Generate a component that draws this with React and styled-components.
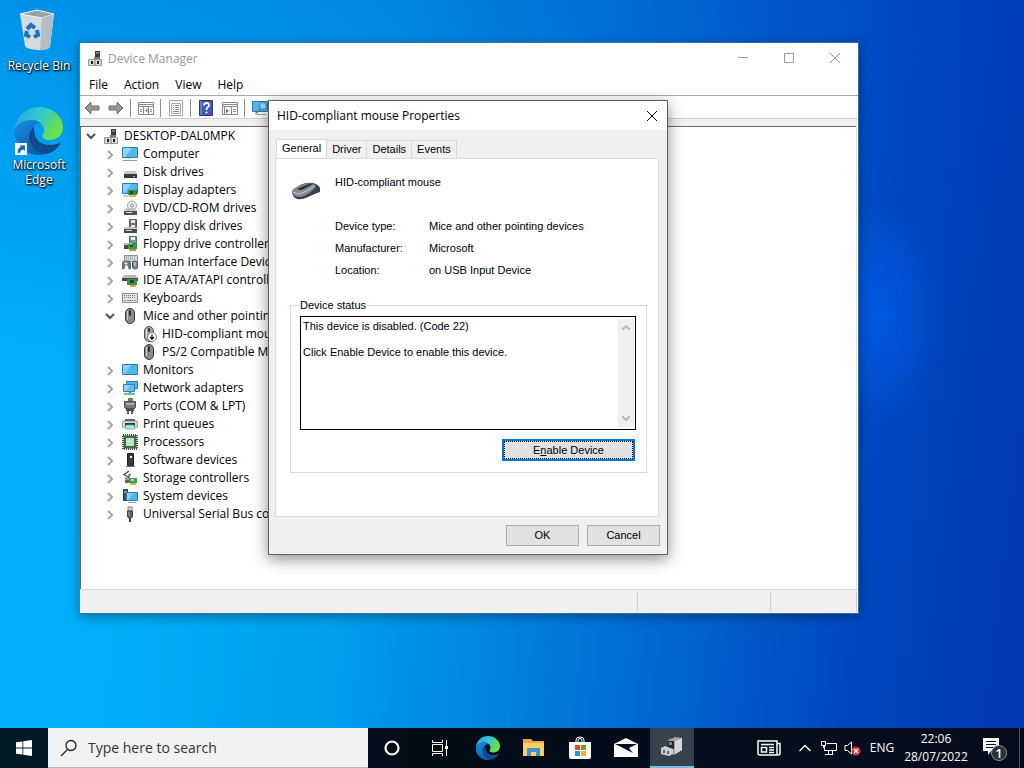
import React, { useState } from "react";
import styled, { createGlobalStyle } from "styled-components";

const GlobalStyle = createGlobalStyle`
  * {
    box-sizing: border-box;
  }
  body {
    margin: 0;
    overflow: hidden;
    font-family: "Open Sans", "Noto Sans", sans-serif;
    font-size: 12px;
    color: #000;
  }
  button, input, textarea {
    font: inherit;
    color: inherit;
    border: none;
    border-radius: 0;
    padding: 0;
    margin: 0;
    background: none;
    outline: none;
  }
`;

// small 16x16 drawings used in the tree and in the toolbar
const icons = {
  devmgr: (
    <>
      <path d="M8 1h5v6H8z" fill="#3d3d3d" />
      <path d="M9 2h3v2H9z" fill="#777" />
      <path d="M7 7h6v2H7z" fill="#777" />
      <path d="M1.5 9.500h13v6h-13z" fill="#d9d9d9" stroke="#9a9a9a" />
      <path d="M4 11h2v3H4zM10 11h2v3h-2z" fill="#222" />
      <path d="M7 10h2v5H7z" fill="#aaa" />
    </>
  ),
  computer: (
    <>
      <path d="M.5 1.5h15v10H.5z" fill="#4fb8f2" stroke="#3779a6" />
      <path d="M1 2h9L3 11H1z" fill="#8ad5fa" />
      <path d="M6 12h4v1H6z" fill="#cfdde6" />
      <path d="M1 14.500h14" stroke="#7ba0c0" />
    </>
  ),
  monitor: (
    <>
      <path d="M.5 2.5h15v10H.5z" fill="#4fb8f2" stroke="#3779a6" />
      <path d="M1 3h8l-6 9H1z" fill="#86d2fa" />
    </>
  ),
  disk: (
    <>
      <path d="M3 7h11l1 3H2z" fill="#c4c8ca" />
      <path d="M2 10h13v4H2z" fill="#343a3c" />
      <path d="M11 12h2v1h-2z" fill="#4fe06b" />
    </>
  ),
  display: (
    <>
      <path d="M.5 1.5h15v10H.5z" fill="#4fb8f2" stroke="#3779a6" />
      <path d="M1 2h8l-6 9H1z" fill="#86d2fa" />
      <path d="M6 8h9v5H6z" fill="#3a8b3e" />
      <path d="M8 9h3v3H8z" fill="#1c4a22" />
      <path d="M7 13h7v2H7z" fill="#e0bc3c" />
      <path d="M1 14h5" stroke="#7ba0c0" />
    </>
  ),
  dvd: (
    <>
      <circle cx="10" cy="5.500" r="4.500" fill="#ececec" stroke="#a4a4a4" />
      <circle cx="10" cy="5.500" r="1.500" fill="#fff" stroke="#8a8a8a" />
      <path d="M4 8h8l3 3H2z" fill="#bfc3c5" />
      <path d="M2 11h13v4H2z" fill="#4b5052" />
      <path d="M4 12h6v1H4z" fill="#ddd" />
    </>
  ),
  floppy: (
    <>
      <path d="M7.500 1.500h7v8h-7z" fill="#6d7679" stroke="#535b5e" />
      <path d="M9 2h4v3H9z" fill="#dbe8ee" />
      <path d="M9 7h4v3H9z" fill="#e9e9e9" />
      <path d="M3 9h10l2 2H2z" fill="#c4c8ca" />
      <path d="M2 11h13v4H2z" fill="#43494b" />
      <path d="M4 12h6v1H4z" fill="#ddd" />
    </>
  ),
  floppyCtl: (
    <>
      <path d="M7.500.500h7v7h-7z" fill="#6c9c9a" stroke="#4d6e6d" />
      <path d="M9 1h4v3H9z" fill="#e4eff2" />
      <path d="M2 7h8v2H2z" fill="#b8bcbe" />
      <path d="M2 9h10v4H2z" fill="#454b4d" />
      <path d="M6 8h9v5H6z" fill="#3d9a48" />
      <path d="M8 9h3v2H8z" fill="#1d5228" />
      <path d="M7 13h7v2H7z" fill="#b59a36" />
    </>
  ),
  hid: (
    <>
      <path d="M2.500 1.500h13v6h-13z" fill="#d8dadc" stroke="#8e9294" />
      <path d="M4 3h10M4 5h10" stroke="#85898c" strokeDasharray="1 1" />
      <path d="M.5 15V9q0-2 2-2h4q2 0 2 2v6H7l-1-4H3l-1 4z" fill="#707a80" stroke="#4f565a" strokeWidth=".7" />
      <path d="M10.500 9q0-2 2.500-2t2.500 2v4q0 2-2.500 2t-2.500-2z" fill="#7e888e" stroke="#4f565a" />
      <path d="M4 8v3M2.500 9.500h3M13 8v4" stroke="#dcecf6" />
    </>
  ),
  ide: (
    <>
      <path d="M2 3h12l2 3H0z" fill="#b8bcbe" />
      <path d="M0 6h16v3H0z" fill="#454b4d" />
      <path d="M5 7h10v6H5z" fill="#38923f" />
      <path d="M8 8h4v3H8z" fill="#1b4923" />
      <path d="M8 13h6v2H8z" fill="#d1ad38" />
    </>
  ),
  keyboard: (
    <>
      <path d="M.5 3.500h15v9H.5z" fill="#e3e5e6" stroke="#8a8e90" />
      <path d="M2 5.500h12M2 7.500h12" stroke="#6e7375" strokeDasharray="1 1" />
      <path d="M2 10.500h2M5 10.500h6M12 10.500h2" stroke="#84898c" />
    </>
  ),
  mouse: (
    <>
      <rect x="3.500" y=".500" width="9" height="15" rx="4.500" fill="#858c90" stroke="#33383a" />
      <path d="M5.500 3v9" stroke="#c9ced1" />
      <rect x="7" y="2" width="2" height="6" rx="1" fill="#2e3234" />
    </>
  ),
  mouseOff: (
    <>
      <rect x="3.500" y=".500" width="9" height="15" rx="4.500" fill="#a2a7aa" stroke="#4a4f52" />
      <path d="M5.500 3v9" stroke="#d9ddde" />
      <rect x="7" y="2" width="2" height="4" rx="1" fill="#2e3234" />
      <circle cx="11" cy="11" r="4.500" fill="#fff" stroke="#777" />
      <path d="M11 8.500v4M9 11l2 2.200 2-2.200" stroke="#111" strokeWidth="1.300" fill="none" />
    </>
  ),
  network: (
    <>
      <path d="M4.500 1.500h11v7h-11z" fill="#4fb8f2" stroke="#3779a6" />
      <path d="M1.500 4.500h11v7h-11z" fill="#5cc0f5" stroke="#3779a6" />
      <path d="M2 5h6l-4 6H2z" fill="#8ed6fa" />
      <path d="M7 12h2v1H7z" fill="#3b8f60" />
      <path d="M2 14h11" stroke="#6cc290" strokeWidth="2" />
    </>
  ),
  port: (
    <>
      <path d="M6 0h5v3H6z" fill="#777" />
      <path d="M2.500 3.500h11v6l-1 1h-9l-1-1z" fill="#70767a" stroke="#4b5053" />
      <path d="M4 5h8v2H4z" fill="#a9aeb0" />
      <path d="M4 11h8v2H4z" fill="#4a4f52" />
      <path d="M6 13v3M10 13v3" stroke="#55595c" strokeWidth="2" />
    </>
  ),
  printer: (
    <>
      <path d="M3 3h10v3H3z" fill="#5e6669" />
      <path d="M1 5h14l1 6H0z" fill="#d9dcde" stroke="#70777a" strokeWidth=".8" />
      <path d="M3 7h10v3H3z" fill="#2f3638" />
      <path d="M4 9h8l1 4H3z" fill="#a6e6ec" stroke="#6da6ad" strokeWidth=".7" />
    </>
  ),
  cpu: (
    <>
      <path d="M1 1h14v14H1z" fill="none" stroke="#3a5d43" strokeWidth="2" strokeDasharray="1 1" />
      <path d="M1.500 1.500h13v13h-13z" fill="#3f6a4a" />
      <path d="M4 4h8v8H4z" fill="#bfe6c4" />
    </>
  ),
  software: (
    <>
      <path d="M5.500 1.500h6v12h-6z" fill="#3a3d3f" stroke="#222" />
      <path d="M8 4h2v2H8z" fill="#fff" />
      <path d="M4 14h9v1H4z" fill="#777" />
    </>
  ),
  storage: (
    <>
      <path d="M7 1L2 4.500l5 3V5l2-1" fill="none" stroke="#4a4f52" strokeWidth="1.300" />
      <path d="M3 8h4l4 2H4z" fill="#c4c8ca" stroke="#555" strokeWidth=".7" />
      <path d="M3 10h10v3H3z" fill="#5b6164" />
      <path d="M7 8h8v5H7z" fill="#439c50" />
      <path d="M9 9h3v2H9z" fill="#a9dcc9" />
      <path d="M8 13h6v2H8z" fill="#d8b03a" />
    </>
  ),
  system: (
    <>
      <path d="M1.500 1.500h4v11h-4z" fill="#4c5356" stroke="#303537" />
      <path d="M2 3h3v2H2z" fill="#58aee0" />
      <path d="M4.500 4.500h11v8h-11z" fill="#4fb8f2" stroke="#3779a6" />
      <path d="M5 5h6l-5 7H5z" fill="#86d2fa" />
      <path d="M6 14.500h8" stroke="#7ba0c0" />
    </>
  ),
  usb: (
    <>
      <path d="M6 1h4v4H6z" fill="#ddd" stroke="#6b6f71" strokeWidth=".9" />
      <path d="M5.500 5h5v5l-1 2h-3l-1-2z" fill="#5b6063" stroke="#404446" />
      <path d="M7 6v4" stroke="#a5aaac" />
      <path d="M8 12v4" stroke="#404446" strokeWidth="2" />
    </>
  ),
  back: <path d="M1 8l6-6v4h8v4H7v4z" fill="#969696" stroke="#6c6c6c" />,
  forward: <path d="M15 8L9 2v4H1v4h8v4z" fill="#969696" stroke="#6c6c6c" />,
  showTree: (
    <>
      <path d="M.5 2.500h15v12H.5z" fill="#fff" stroke="#84898d" />
      <path d="M1 4.500h14M1 6.500h14" stroke="#84898d" />
      <path d="M5.500 7v8M10.500 7v8M2 9.500h2M2 11.500h2M12 9.500h2M12 11.500h2" stroke="#84898d" />
      <path d="M9.500 8.500v4L7 10.500z" fill="#4a9a3a" />
    </>
  ),
  properties: (
    <>
      <path d="M1.500 .500h13v15h-13z" fill="#fff" stroke="#a0a4a7" />
      <path d="M3.500 3.500h9v10h-9z" fill="none" stroke="#a3a7aa" />
      <path d="M5 5.500h1M7 5.500h4M5 7.500h1M7 7.500h4M5 9.500h1M7 9.500h4M5 11.500h6" stroke="#8a8f93" />
    </>
  ),
  help: (
    <>
      <path d="M1.500 .500h13v15h-13z" fill="#4256b8" stroke="#2b3987" />
      <path d="M2 1h2v14H2z" fill="#6a7bd0" />
      <path d="M6 5.500q0-2.500 2.500-2.500T11 5.300q0 1.200-1.300 2T8.500 10" fill="none" stroke="#fff" strokeWidth="1.800" />
      <circle cx="8.500" cy="12.500" r="1.100" fill="#fff" />
    </>
  ),
  actionPane: (
    <>
      <path d="M.5 2.500h15v12H.5z" fill="#fff" stroke="#84898d" />
      <path d="M1 4.500h14M1 6.500h14" stroke="#84898d" />
      <path d="M9.500 7v8M11 9.500h3M11 11.500h3M2.500 7v8" stroke="#84898d" />
      <path d="M4 8.500v5l3-2.500z" fill="#4a9a3a" />
    </>
  ),
  scan: (
    <>
      <path d="M.5 1.500h15v10H.5z" fill="#4fb8f2" stroke="#3779a6" />
      <circle cx="11" cy="6" r="3.500" fill="#9bd9f8" stroke="#597d94" />
      <path d="M8.500 9l-5 5" stroke="#597d94" fill="none" strokeWidth="1.500" />
      <path d="M5 14.500h9" stroke="#7ba0c0" />
    </>
  ),
};

const Icon = ({ name }) => (
  <IconBox viewBox="0 0 16 16" aria-hidden="true">
    {icons[name]}
  </IconBox>
);

const Swirl = ({ size, id }) => (
  <svg width={size} height={size} viewBox="0 0 48 48" aria-hidden="true">
    <defs>
      <linearGradient id={`${id}-a`} x1="0" y1="0" x2="1" y2=".4">
        <stop offset="0" stopColor="#2aa3e8" />
        <stop offset=".5" stopColor="#2fc6d4" />
        <stop offset="1" stopColor="#6be04a" />
      </linearGradient>
      <linearGradient id={`${id}-b`} x1="0" y1="0" x2=".6" y2="1">
        <stop offset="0" stopColor="#1b8fdc" />
        <stop offset="1" stopColor="#0d58ad" />
      </linearGradient>
    </defs>
    <path d="M0 23C1 9 11 0 24 0c14 0 24 10 24 20 0 8-6 13-13 13-6 0-8-2-8-4 0-1 2-2 2-6 0-5-5-10-12-10C9 13 2 17 0 23z" fill={`url(#${id}-a)`} />
    <path d="M0 24c1-7 8-11 16-11 3 0 7 1 9 3-6 0-11 6-11 13 0 8 6 16 15 18-2 1-4 1-5 1C10 48-1 37 0 24z" fill={`url(#${id}-b)`} />
    <path d="M19 19c-3 3-5 6-5 11 0 9 8 17 17 17 6-1 11-5 14-10 1-1 0-2-1-1-3 1-5 2-9 2-10 0-17-6-16-19z" fill="#114a8b" />
  </svg>
);

const tree = [
  { label: "Computer", icon: "computer" },
  { label: "Disk drives", icon: "disk" },
  { label: "Display adapters", icon: "display" },
  { label: "DVD/CD-ROM drives", icon: "dvd" },
  { label: "Floppy disk drives", icon: "floppy" },
  { label: "Floppy drive controllers", icon: "floppyCtl" },
  { label: "Human Interface Devices", icon: "hid" },
  { label: "IDE ATA/ATAPI controllers", icon: "ide" },
  { label: "Keyboards", icon: "keyboard" },
  {
    label: "Mice and other pointing devices",
    icon: "mouse",
    items: [
      { label: "HID-compliant mouse", icon: "mouseOff" },
      { label: "PS/2 Compatible Mouse", icon: "mouse" },
    ],
  },
  { label: "Monitors", icon: "monitor" },
  { label: "Network adapters", icon: "network" },
  { label: "Ports (COM & LPT)", icon: "port" },
  { label: "Print queues", icon: "printer" },
  { label: "Processors", icon: "cpu" },
  { label: "Software devices", icon: "software" },
  { label: "Storage controllers", icon: "storage" },
  { label: "System devices", icon: "system" },
  { label: "Universal Serial Bus controllers", icon: "usb" },
];

const TreeRow = ({ label, icon, level, open, leaf }) => (
  <Row $level={level}>
    <Chevron viewBox="0 0 16 16" aria-hidden="true">
      {!leaf &&
        (open ? (
          <path d="M4 6l4 4 4-4" stroke="#505050" />
        ) : (
          <path d="M6 5l4 4-4 4" stroke="#a6a6a6" />
        ))}
    </Chevron>
    <Icon name={icon} />
    <RowLabel>{label}</RowLabel>
  </Row>
);

const DeviceManager = () => (
  <MainWindow aria-label="Device Manager">
    <TitleBar>
      <Icon name="devmgr" />
      <WindowTitle>Device Manager</WindowTitle>
      <Caption aria-label="Minimize">
        <svg width="10" height="10"><path d="M0 4.500h10" stroke="#999" /></svg>
      </Caption>
      <Caption aria-label="Maximize">
        <svg width="10" height="10"><path d="M.5 .5h9v9h-9z" stroke="#999" fill="none" /></svg>
      </Caption>
      <Caption aria-label="Close">
        <svg width="10" height="10"><path d="M0 0l10 10M10 0L0 10" stroke="#999" /></svg>
      </Caption>
    </TitleBar>
    <MenuBar>
      {["File", "Action", "View", "Help"].map((m) => (
        <button key={m}>{m}</button>
      ))}
    </MenuBar>
    <Toolbar>
      <Tool aria-label="Back"><Icon name="back" /></Tool>
      <Tool aria-label="Forward"><Icon name="forward" /></Tool>
      <Divider />
      <Tool aria-label="Show console tree"><Icon name="showTree" /></Tool>
      <Divider />
      <Tool aria-label="Properties"><Icon name="properties" /></Tool>
      <Divider />
      <Tool aria-label="Help"><Icon name="help" /></Tool>
      <Tool aria-label="Show action pane"><Icon name="actionPane" /></Tool>
      <Divider />
      <Tool aria-label="Scan for hardware changes"><Icon name="scan" /></Tool>
    </Toolbar>
    <TreePane>
      <List>
        <li>
          <TreeRow label="DESKTOP-DAL0MPK" icon="devmgr" level={0} open />
          <List>
            {tree.map((node) => (
              <li key={node.label}>
                <TreeRow {...node} level={1} open={!!node.items} />
                {node.items && (
                  <List>
                    {node.items.map((item) => (
                      <li key={item.label}>
                        <TreeRow {...item} level={2} leaf />
                      </li>
                    ))}
                  </List>
                )}
              </li>
            ))}
          </List>
        </li>
      </List>
    </TreePane>
    <StatusBar>
      <StatusCell $grow />
      <StatusCell $width="133px" />
      <StatusCell $width="86px" />
    </StatusBar>
  </MainWindow>
);

const PropertiesDialog = () => {
  const [tab, setTab] = useState("General");
  return (
    <Dialog role="dialog" aria-label="HID-compliant mouse Properties">
      <DialogTitle>
        <span>HID-compliant mouse Properties</span>
        <Caption aria-label="Close" $small>
          <svg width="12" height="12"><path d="M1 1l10 10M11 1L1 11" stroke="#000" /></svg>
        </Caption>
      </DialogTitle>
      <Tabs role="tablist">
        {["General", "Driver", "Details", "Events"].map((t) => (
          <Tab key={t} role="tab" aria-selected={t === tab} $active={t === tab} onClick={() => setTab(t)}>
            {t}
          </Tab>
        ))}
      </Tabs>
      <TabPanel role="tabpanel">
        <Device>
          <svg width="32" height="32" viewBox="0 0 32 32" aria-hidden="true">
            <path d="M2 15l8-6q7-3 13-2 6 2 7 5v4q-6 2-12 5-6 3-11 2-5-2-5-8z" fill="#3a4148" />
            <path d="M2 15q1-3 9-6 7-3 12-1 5 2 1 5-4 4-10 7-5 2-9 0-3-2-3-5z" fill="#828c95" />
            <path d="M3 16q4 3 9 1 8-3 12-7" fill="none" stroke="#c6ced4" />
            <path d="M7 13l9-4q4-2 7-1l-9 5q-4 2-7 0z" fill="#2b3137" />
          </svg>
          <span>HID-compliant mouse</span>
        </Device>
        <Details>
          <dt>Device type:</dt>
          <dd>Mice and other pointing devices</dd>
          <dt>Manufacturer:</dt>
          <dd>Microsoft</dd>
          <dt>Location:</dt>
          <dd>on USB Input Device</dd>
        </Details>
        <Group>
          <legend>Device status</legend>
          <StatusBox>
            <textarea
              readOnly
              rows={8}
              aria-label="Device status"
              value={"This device is disabled. (Code 22)\n\nClick Enable Device to enable this device."}
            />
            <ScrollTrack>
              <svg width="8" height="5"><path d="M0 5l4-4 4 4" stroke="#b8b8b8" strokeWidth="2" fill="none" /></svg>
              <svg width="8" height="5"><path d="M0 0l4 4 4-4" stroke="#b8b8b8" strokeWidth="2" fill="none" /></svg>
            </ScrollTrack>
          </StatusBox>
          <EnableButton>
            <span>E<u>n</u>able Device</span>
          </EnableButton>
        </Group>
      </TabPanel>
      <Footer>
        <DialogButton>OK</DialogButton>
        <DialogButton>Cancel</DialogButton>
      </Footer>
    </Dialog>
  );
};

const Taskbar = () => (
  <Bar>
    <BarButton $width="48px" aria-label="Start">
      <svg width="16" height="16" fill="#fff">
        <path d="M0 2.300L6.500 1.400v6.200H0zM7.300 1.300L16 0v7.600H7.300zM0 8.400h6.500v6.200L0 13.700zM7.300 8.400H16V16l-8.700-1.300z" />
      </svg>
    </BarButton>
    <Search>
      <svg width="18" height="18" viewBox="0 0 18 18" fill="none" stroke="#222" strokeWidth="1.300">
        <circle cx="11" cy="6.500" r="5" />
        <path d="M7.500 10.500L1 17" />
      </svg>
      <input type="text" placeholder="Type here to search" aria-label="Search" />
    </Search>
    <BarButton $width="48px" aria-label="Cortana">
      <svg width="16" height="16"><circle cx="8" cy="8" r="6.500" fill="none" stroke="#fff" strokeWidth="2.200" /></svg>
    </BarButton>
    <BarButton $width="48px" aria-label="Task View">
      <svg width="18" height="16" fill="none" stroke="#fff">
        <path d="M1.500 4.500h10v7h-10zM1.500 0v2.500h10V0M1.500 16v-2.500h10V16M15.500 0v16" />
        <path d="M14 6h3v3h-3z" fill="#fff" stroke="none" />
      </svg>
    </BarButton>
    <Pinned>
      <BarButton $width="44px" aria-label="Microsoft Edge"><Swirl size={24} id="edge-bar" /></BarButton>
      <BarButton $width="44px" aria-label="File Explorer">
        <svg width="22" height="20">
          <path d="M0 1h8l2 2h11v15H0z" fill="#e9ac3b" />
          <path d="M0 5h21v13H0z" fill="#f9cf68" />
          <path d="M4 18v-7q0-1 1-1h11q1 0 1 1v7h-4v-4H8v4z" fill="#3f93d1" />
        </svg>
      </BarButton>
      <BarButton $width="44px" aria-label="Microsoft Store">
        <svg width="24" height="24">
          <path d="M8 7V4q0-3 4-3t4 3v3M10 7V4q0-1.500 2-1.500T14 4v3" stroke="#fff" fill="none" />
          <path d="M1 6h22v15q0 2-2 2H3q-2 0-2-2z" fill="#fff" />
          <path d="M7 9h5v5H7z" fill="#e0512b" />
          <path d="M13 9h5v5h-5z" fill="#6ba42c" />
          <path d="M7 15h5v5H7z" fill="#2b93d4" />
          <path d="M13 15h5v5h-5z" fill="#eeb325" />
        </svg>
      </BarButton>
      <BarButton $width="44px" aria-label="Mail">
        <svg width="24" height="20">
          <path d="M0 6l12-6 12 6v13H0z" fill="#fff" />
          <path d="M1 6h22l-8 4 4 5z" fill="#04101b" />
        </svg>
      </BarButton>
      <BarButton $width="44px" $active aria-label="Device Manager">
        <svg width="24" height="22">
          <path d="M8 4l7-3 7 1v12l-8 5-6-4z" fill="#a4a4a4" />
          <path d="M15 5l7-3v12l-7 4z" fill="#d6d6d6" />
          <path d="M8 5h6v8H8z" fill="#222b31" />
          <path d="M9 6h3v3H9z" fill="#78848c" />
          <path d="M1 12l4-2 8 3v5l-4 2-8-2z" fill="#cfcfcf" />
          <path d="M3 14h2v3H3zM7 15h2v3H7z" fill="#666" />
        </svg>
      </BarButton>
    </Pinned>
    <Tray>
      <BarButton $width="48px" aria-label="News and interests">
        <svg width="24" height="16" fill="none" stroke="#fff" strokeWidth="1.500">
          <path d="M1 1h19v14H3q-2 0-2-2zM20 3.500h3V13q0 2-2 2" />
          <path d="M4 4.500h13M12 7.500h5M12 10h5M12 12.500h5M4.500 7.500h5v4.500h-5z" />
        </svg>
      </BarButton>
      <BarButton $width="24px" aria-label="Show hidden icons">
        <svg width="12" height="8" fill="none" stroke="#fff" strokeWidth="1.300"><path d="M.5 7L6 1.500 11.500 7" /></svg>
      </BarButton>
      <BarButton $width="24px" aria-label="Network">
        <svg width="16" height="16" fill="none" stroke="#fff">
          <path d="M5.500 3.500h10v7H3.500V6M7.500 11v3M11.500 11v3M4 14.500h8M.5 1.500h4v4h-4zM2.500 5v3" />
        </svg>
      </BarButton>
      <BarButton $width="24px" aria-label="Volume muted">
        <svg width="18" height="16" fill="none" stroke="#fff">
          <path d="M1 5.500h2.500L7.500 2v12l-4-3.500H1z" />
          <circle cx="12" cy="11" r="4.500" fill="#d9333c" stroke="none" />
          <path d="M10 9l4 4M14 9l-4 4" strokeWidth="1.300" />
        </svg>
      </BarButton>
      <BarButton $width="34px">ENG</BarButton>
      <BarButton $width="74px">
        22:06
        <br />
        28/07/2022
      </BarButton>
      <BarButton $width="46px" aria-label="1 new notification">
        <svg width="26" height="26">
          <path d="M0 3h16v13H8l-3 4v-4H0z" fill="#fff" />
          <path d="M3 6.500h10M3 9.500h10M3 12.500h7" stroke="#07101c" />
          <circle cx="16" cy="18" r="7.500" fill="#2b3038" stroke="#8c9096" />
          <text x="16" y="23" fill="#fff" fontSize="13" fontWeight="600" textAnchor="middle">1</text>
        </svg>
      </BarButton>
      <ShowDesktop aria-label="Show desktop" />
    </Tray>
  </Bar>
);

const App = () => (
  <Desktop>
    <GlobalStyle />
    <Workspace>
      <Shortcuts>
        <Shortcut>
          <svg width="48" height="48" viewBox="0 0 48 48" aria-hidden="true">
            <path d="M5 6l17-4 17 4-4 33q-1 3-12 3-12-1-13-4z" fill="#d3dce3" />
            <path d="M5 6l17-4 17 4-12 4z" fill="#98a5ad" stroke="#eef5f9" />
            <path d="M27 10l12-4-4 33q-3 3-10 3z" fill="#b3bec6" />
            <path d="M12 21l4-4 4 3M22 22l1 5-4 2M15 29l-4-2 1-4" fill="none" stroke="#1873c7" strokeWidth="4" />
          </svg>
          Recycle Bin
        </Shortcut>
        <Shortcut>
          <LinkIcon>
            <Swirl size={48} id="edge-desk" />
            <svg width="12" height="12">
              <path d="M0 0h12v12H0z" fill="#f2f6fa" />
              <path d="M3 10q-1-5 3-6L4.500 2.500H10V8L8.500 6.500Q5 7 5 10z" fill="#1c63b4" />
            </svg>
          </LinkIcon>
          Microsoft
          <br />
          Edge
        </Shortcut>
      </Shortcuts>
      <DeviceManager />
      <PropertiesDialog />
    </Workspace>
    <Taskbar />
  </Desktop>
);

const Desktop = styled.div`
  display: flex;
  flex-direction: column;
  height: 100vh;
  background:
    radial-gradient(ellipse 60px 110px at 86% 41%, rgba(0, 96, 240, 0.7), rgba(0, 90, 235, 0)),
    linear-gradient(to bottom, rgba(0, 60, 190, 0.26), rgba(0, 70, 190, 0) 50%),
    linear-gradient(97deg, #00b2fb 0%, #00aef8 18%, #00a0ee 36%, #007cdc 56%, #0060ce 70%, #0048c0 83%, #0038b0 100%);
`;

const Workspace = styled.main`
  position: relative;
  flex: 1;
  min-height: 0;
`;

const Shortcuts = styled.div`
  display: flex;
  flex-direction: column;
  width: 78px;
  padding-top: 8px;
  gap: 34px;
`;

const Shortcut = styled.button`
  display: block;
  color: #fff;
  line-height: 15px;
  text-align: center;
  text-shadow: 0 1px 2px #000, 1px 1px 2px #000;

  svg {
    display: block;
    margin: 0 auto 2px;
  }
`;

const LinkIcon = styled.span`
  display: block;
  position: relative;
  width: 48px;
  margin: 0 auto;

  svg + svg {
    position: absolute;
    left: 0;
    bottom: 0;
    margin: 0;
  }
`;

const MainWindow = styled.section`
  position: absolute;
  left: 79px;
  top: 42px;
  width: 780px;
  height: 572px;
  display: flex;
  flex-direction: column;
  background: #fff;
  border: 1px solid #33719c;
  border-left-color: #2a87b8;
  box-shadow: 0 3px 10px rgba(0, 0, 0, 0.35);
`;

const IconBox = styled.svg`
  width: 16px;
  height: 16px;
  flex: none;
`;

const TitleBar = styled.header`
  display: flex;
  align-items: center;
  height: 30px;
  padding-left: 7px;
  gap: 5px;
  color: #999;
`;

const WindowTitle = styled.span`
  flex: 1;
`;

const Caption = styled.button`
  display: flex;
  align-items: center;
  justify-content: center;
  width: ${(props) => (props.$small ? "30px" : "46px")};
  height: 30px;
  margin-left: ${(props) => (props.$small ? "auto" : "-5px")};
`;

const MenuBar = styled.nav`
  display: flex;
  align-items: center;
  height: 23px;
  padding-left: 9px;
  gap: 16px;
  border-bottom: 1px solid #a8a8a8;
`;

const Toolbar = styled.div`
  display: flex;
  align-items: center;
  height: 23px;
  padding-top: 2px;
  border-bottom: 1px solid #d0d0d0;
`;

const Tool = styled.button`
  display: flex;
  align-items: center;
  justify-content: center;
  width: 24px;
  height: 20px;
`;

const Divider = styled.span`
  width: 1px;
  height: 18px;
  margin: 0 3px 0 2px;
  background: #8f8f8f;
`;

const TreePane = styled.div`
  flex: 1;
  margin-right: 1px;
  overflow: hidden;
  border-top: 7px solid #f0f0f0;
  border-right: 1px solid #e3e3e3;

  > ul {
    height: 100%;
    border-top: 1px solid #696969;
    border-left: 1px solid #696969;
    padding-left: 2px;
  }
`;

const List = styled.ul`
  list-style: none;
  margin: 0;
  padding: 0;
`;

const Row = styled.div`
  display: flex;
  align-items: center;
  height: 18px;
  padding-left: ${(props) => props.$level * 19}px;
  line-height: 16px;
`;

const Chevron = styled.svg`
  width: 16px;
  height: 16px;
  margin-right: 4px;
  fill: none;
  stroke-width: 2;
`;

const RowLabel = styled.span`
  margin-left: 5px;
  padding-bottom: 1px;
  white-space: nowrap;
`;

const StatusBar = styled.footer`
  display: flex;
  height: 24px;
  padding: 2px 1px 1px 0;
  background: #f0f0f0;
  border-top: 1px solid #d7d7d7;
`;

const StatusCell = styled.div`
  flex: ${(props) => (props.$grow ? "1" : "none")};
  width: ${(props) => props.$width || "auto"};
  border-right: 1px solid #d0d0d0;
`;

const Dialog = styled.section`
  position: absolute;
  left: 268px;
  top: 100px;
  width: 400px;
  height: 455px;
  display: flex;
  flex-direction: column;
  background: #f0f0f0;
  border: 1px solid #5f5f5f;
  box-shadow: 0 4px 14px rgba(0, 0, 0, 0.45);
  font-family: "Liberation Sans", Arial, sans-serif;
  font-size: 11px;
  line-height: 13px;
`;

const DialogTitle = styled.header`
  display: flex;
  align-items: center;
  height: 29px;
  padding-left: 8px;
  background: #fff;
  font-family: "Open Sans", "Noto Sans", sans-serif;
  font-size: 12px;
`;

const Tabs = styled.div`
  display: flex;
  align-items: flex-end;
  height: 28px;
  padding-left: 7px;
`;

const Tab = styled.button`
  height: ${(props) => (props.$active ? "20px" : "18px")};
  padding: ${(props) => (props.$active ? "0 5px 2px" : "0 5px")};
  margin-bottom: ${(props) => (props.$active ? "-1px" : "0")};
  background: ${(props) => (props.$active ? "#fff" : "#f0f0f0")};
  border: 1px solid #d9d9d9;
  border-bottom: none;
  border-left-width: ${(props) => (props.$active ? "1px" : "0")};
`;

const TabPanel = styled.div`
  flex: 1;
  margin: 0 8px 0 6px;
  padding: 17px 11px 0 14px;
  background: #fff;
  border: 1px solid #dcdcdc;
`;

const Device = styled.div`
  display: flex;
  gap: 13px;
`;

const Details = styled.dl`
  display: grid;
  grid-template-columns: 94px 1fr;
  row-gap: 9px;
  margin: 12px 0 22px 45px;

  dd {
    margin: 0;
  }
`;

const Group = styled.fieldset`
  display: flex;
  flex-direction: column;
  margin: 0;
  min-width: 0;
  padding: 4px 10px 11px 9px;
  border: 1px solid #dcdcdc;

  legend {
    padding: 0 3px 0 0;
  }
`;

const StatusBox = styled.div`
  display: flex;
  height: 114px;
  border: 1px solid #000;

  textarea {
    flex: 1;
    padding: 3px 2px;
    resize: none;
    overflow: hidden;
  }
`;

const ScrollTrack = styled.div`
  display: flex;
  flex-direction: column;
  justify-content: space-between;
  align-items: center;
  width: 16px;
  margin: 2px 1px;
  padding: 6px 0;
  background: #f0f0f0;
`;

const EnableButton = styled.button`
  align-self: flex-end;
  width: 133px;
  height: 22px;
  margin: 9px 1px 0 0;
  background: #e1e1e1;
  border: 2px solid #0078d7;

  span {
    display: block;
    line-height: 16px;
    border: 1px dotted #000;
  }
`;

const Footer = styled.footer`
  display: flex;
  justify-content: flex-end;
  gap: 8px;
  padding: 8px 7px;
`;

const DialogButton = styled.button`
  width: 73px;
  height: 21px;
  background: #e1e1e1;
  border: 1px solid #adadad;
`;

const Bar = styled.footer`
  display: flex;
  height: 40px;
  color: #fff;
  background: linear-gradient(to right, #021b29, #020d18 40%, #050d1c);
`;

const BarButton = styled.button`
  display: flex;
  align-items: center;
  justify-content: center;
  flex: none;
  width: ${(props) => props.$width};
  height: 40px;
  line-height: 18px;
  white-space: nowrap;
  background: ${(props) => (props.$active ? "#36434e" : "none")};
  border-bottom: ${(props) => (props.$active ? "2px solid #76b9ed" : "none")};
`;

const Search = styled.label`
  display: flex;
  align-items: center;
  flex: 0 1 320px;
  padding-left: 12px;
  gap: 10px;
  background: #f1f2f3;
  border-bottom: 1px solid #b5b5b5;

  input {
    flex: 1;
    min-width: 0;
    font-size: 14px;
    color: #333;
  }
  input::placeholder {
    color: #333;
    opacity: 1;
  }
`;

const Pinned = styled.div`
  display: flex;
  gap: 2px;
  padding-left: 2px;
`;

const Tray = styled.div`
  display: flex;
  margin-left: auto;
`;

const ShowDesktop = styled.button`
  width: 5px;
  border-left: 1px solid #4a525e;
`;

export default App;
